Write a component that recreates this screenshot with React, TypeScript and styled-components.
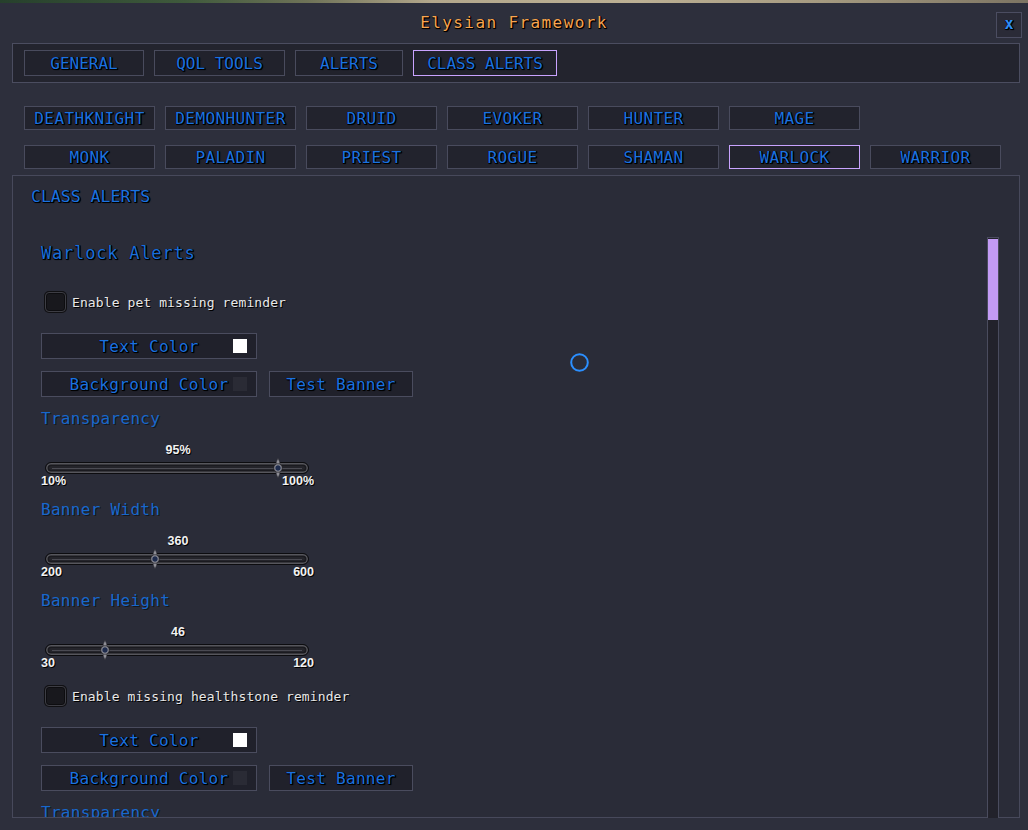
import React from "react";
import styled, { createGlobalStyle } from "styled-components";

const GlobalStyle = createGlobalStyle`
  html, body {
    margin: 0;
    padding: 0;
    width: 1028px;
    height: 830px;
    overflow: hidden;
    background: #2d2f3c;
  }
  body {
    font-family: "DejaVu Sans Mono", "Liberation Mono", monospace;
  }
  #root { width: 1028px; height: 830px; }
  * { box-sizing: border-box; }
`;

const BLUE = "#1b72e0";
const OUTLINE =
  "1px 1px 0 #000, 1px 0 0 #000, 0 1px 0 #000, -0.5px -0.5px 0 rgba(0,0,0,0.7), 1px 1px 1px #000";

const Backdrop = styled.div`
  position: relative;
  width: 1028px;
  height: 830px;
  display: flex;
  flex-direction: column;
  background: linear-gradient(
    90deg,
    #26402c 0%,
    #3f5a3c 18%,
    #6f7358 30%,
    #b3a78c 42%,
    #bcb094 62%,
    #a59a80 80%,
    #7d7563 100%
  );
`;

const Window = styled.div`
  margin-top: 3px;
  height: 827px;
  display: flex;
  flex-direction: column;
  padding: 0 8px 12px 12px;
  background: #2d2f3c;
`;

const TitleBar = styled.div`
  height: 40px;
  margin: 0 -8px 0 -12px;
  display: grid;
  grid-template-columns: 1fr auto 1fr;
  align-items: center;
`;

const Title = styled.div`
  grid-column: 2;
  font-size: 16px;
  line-height: 20px;
  letter-spacing: 1.4px;
  color: #f7a551;
  text-shadow: 1px 1px 0 #000, 1px 0 0 #000, 0 1px 0 #000, 1px 1px 1px #000;
`;

const CloseButton = styled.div`
  grid-column: 3;
  justify-self: end;
  align-self: start;
  margin: 9px 6px 0 0;
  width: 26px;
  height: 26px;
  border: 1px solid #4b4d61;
  background: #2a2b37;
  display: flex;
  align-items: center;
  justify-content: center;
  font-weight: bold;
  font-size: 15px;
  line-height: 1;
  color: #2e8df5;
  text-shadow: ${OUTLINE};
  padding-bottom: 2px;
`;

const TabBar = styled.div`
  height: 40px;
  border: 1px solid #4b4d60;
  background: #23242e;
  display: flex;
  align-items: center;
  gap: 10px;
  padding: 0 11px;
`;

const TabButton = styled.div<{ $w: number; $active?: boolean }>`
  width: ${(p) => p.$w}px;
  height: 26px;
  border: 1px solid ${(p) => (p.$active ? "#c9a3ff" : "#494b5d")};
  background: #21222c;
  display: flex;
  align-items: center;
  justify-content: center;
  font-size: 16px;
  color: ${BLUE};
  text-shadow: ${OUTLINE};
  white-space: nowrap;
`;

const ClassGrid = styled.div`
  margin-top: 23px;
  padding-left: 12px;
  display: grid;
  grid-template-columns: repeat(7, 131px);
  column-gap: 10px;
  row-gap: 15px;
`;

const ClassButton = styled.div<{ $active?: boolean; $rowStart?: boolean }>`
  grid-column-start: ${(p) => (p.$rowStart ? 1 : "auto")};
  height: 24px;
  border: 1px solid ${(p) => (p.$active ? "#c9a3ff" : "#494b5d")};
  background: #22232d;
  display: flex;
  align-items: center;
  justify-content: center;
  font-size: 16px;
  letter-spacing: 0.4px;
  color: ${BLUE};
  text-shadow: ${OUTLINE};
`;

const Panel = styled.div`
  margin-top: 6px;
  flex: 1;
  min-height: 0;
  border: 1px solid #47495b;
  background: #2a2c38;
  display: flex;
  flex-direction: column;
`;

const PanelHeader = styled.div`
  padding: 11px 0 0 18px;
  font-size: 16.5px;
  line-height: 20px;
  color: ${BLUE};
  text-shadow: ${OUTLINE};
`;

const PanelBody = styled.div`
  margin-top: 30px;
  flex: 1;
  min-height: 0;
  display: flex;
`;

const ScrollContent = styled.div`
  flex: 1;
  overflow: hidden;
  padding: 6px 0 0 28px;
  display: flex;
  flex-direction: column;
`;

const ScrollTrack = styled.div`
  width: 12px;
  margin: 0 20px -1px 0;
  border: 1px solid #4a4c5e;
  border-bottom: none;
  background: #22222b;
  padding: 1px 0 0 0;
`;

const ScrollThumb = styled.div`
  height: 81px;
  background: #c39bf5;
`;

const SectionTitle = styled.div`
  font-size: 17px;
  line-height: 20px;
  letter-spacing: 0.8px;
  color: #1a6fdb;
  text-shadow: ${OUTLINE};
`;

const CheckRow = styled.div<{ $mt: number }>`
  margin-top: ${(p) => p.$mt}px;
  height: 20px;
  padding-left: 4px;
  display: flex;
  align-items: center;
  gap: 6px;
`;

const CheckBox = styled.div`
  width: 21px;
  height: 20px;
  border-radius: 4px;
  background: #18181d;
  border: 1px solid #3d3d44;
  box-shadow: 0 0 0 1px #101013, inset 0 0 0 1px #0d0d10;
`;

const CheckLabel = styled.span`
  font-size: 13px;
  letter-spacing: 0.1px;
  color: #e8e8e8;
  text-shadow: 1px 1px 0 #000;
`;

const ButtonRow = styled.div<{ $mt: number }>`
  margin-top: ${(p) => p.$mt}px;
  display: flex;
  gap: 12px;
`;

const ActionButton = styled.div<{ $w: number }>`
  position: relative;
  width: ${(p) => p.$w}px;
  height: 26px;
  border: 1px solid #4a4c5e;
  background: #20212b;
  display: flex;
  align-items: center;
  justify-content: center;
  font-size: 16px;
  letter-spacing: 0.3px;
  color: ${BLUE};
  text-shadow: ${OUTLINE};
  white-space: nowrap;
`;

const Swatch = styled.span<{ $color: string }>`
  position: absolute;
  right: 9px;
  top: 5px;
  width: 14px;
  height: 14px;
  background: ${(p) => p.$color};
`;

const SectionLabel = styled.div<{ $mt: number }>`
  margin-top: ${(p) => p.$mt}px;
  font-size: 16px;
  line-height: 18px;
  letter-spacing: 0.3px;
  color: #1868cc;
  text-shadow: 1px 1px 0 rgba(0, 0, 0, 0.5);
`;

const SliderBlock = styled.div`
  margin-top: 15px;
  width: 273px;
  display: flex;
  flex-direction: column;
`;

const SliderText = styled.div`
  font-family: "Liberation Sans", Arial, sans-serif;
  font-weight: bold;
  font-size: 12.5px;
  line-height: 14px;
  color: #f2f2f2;
  text-shadow: 1px 1px 0 #000;
`;

const SliderValue = styled(SliderText)`
  text-align: center;
  padding-left: 1px;
`;

const Track = styled.div`
  position: relative;
  margin: 5px 5px 0 4px;
  height: 12px;
  border-radius: 6px;
  background: #24242a;
  border: 1px solid #0c0c0f;
  box-shadow: inset 0 0 0 1.5px #56565c, inset 0 0 0 3px #1a1a1f;

  &::after {
    content: "";
    position: absolute;
    left: 6px;
    right: 6px;
    top: 5px;
    height: 1px;
    background: #4a4a52;
  }
`;

const ThumbHolder = styled.div`
  position: absolute;
  top: -5px;
  width: 10px;
  height: 20px;
  margin-left: -5px;
  z-index: 1;
  display: flex;
`;

const RangeRow = styled(SliderText)`
  display: flex;
  justify-content: space-between;
`;

const CursorRing = styled.svg`
  position: absolute;
  left: 569px;
  top: 352px;
`;

const tabs = [
  { label: "GENERAL", w: 120 },
  { label: "QOL TOOLS", w: 131 },
  { label: "ALERTS", w: 108 },
  { label: "CLASS ALERTS", w: 144, active: true },
];

const classes = [
  "DEATHKNIGHT",
  "DEMONHUNTER",
  "DRUID",
  "EVOKER",
  "HUNTER",
  "MAGE",
  "MONK",
  "PALADIN",
  "PRIEST",
  "ROGUE",
  "SHAMAN",
  "WARLOCK",
  "WARRIOR",
];

const Thumb: React.FC = () => (
  <svg width="10" height="20" viewBox="0 0 10 20">
    <path d="M5 0 L6.8 4 L6.8 16 L5 20 L3.2 16 L3.2 4 Z" fill="#8e8e96" stroke="#2a2a30" strokeWidth="0.6" />
    <circle cx="5" cy="10" r="4.2" fill="#9a9aa2" stroke="#202026" strokeWidth="0.8" />
    <circle cx="5" cy="10" r="2.7" fill="#1f2c4d" />
  </svg>
);

type SliderProps = {
  label: string;
  mt: number;
  value: number;
  min: number;
  max: number;
  suffix?: string;
};

const Slider: React.FC<SliderProps> = ({ label, mt, value, min, max, suffix = "" }) => {
  const t = (value - min) / (max - min);
  return (
    <>
      <SectionLabel $mt={mt}>{label}</SectionLabel>
      <SliderBlock>
        <SliderValue>
          {value}
          {suffix}
        </SliderValue>
        <Track>
          <ThumbHolder style={{ left: `${19 + t * 226}px` }}>
            <Thumb />
          </ThumbHolder>
        </Track>
        <RangeRow>
          <span>
            {min}
            {suffix}
          </span>
          <span>
            {max}
            {suffix}
          </span>
        </RangeRow>
      </SliderBlock>
    </>
  );
};

const AlertGroup: React.FC<{ checkLabel: string; checkMt: number }> = ({ checkLabel, checkMt }) => (
  <>
    <CheckRow $mt={checkMt}>
      <CheckBox />
      <CheckLabel>{checkLabel}</CheckLabel>
    </CheckRow>
    <ButtonRow $mt={21}>
      <ActionButton $w={216}>
        Text Color
        <Swatch $color="#ffffff" />
      </ActionButton>
    </ButtonRow>
    <ButtonRow $mt={12}>
      <ActionButton $w={216}>
        Background Color
        <Swatch $color="#2a2b35" />
      </ActionButton>
      <ActionButton $w={144}>Test Banner</ActionButton>
    </ButtonRow>
  </>
);

export default function App() {
  return (
    <Backdrop>
      <GlobalStyle />
      <Window>
        <TitleBar>
          <Title>Elysian Framework</Title>
          <CloseButton>x</CloseButton>
        </TitleBar>
        <TabBar>
          {tabs.map((t) => (
            <TabButton key={t.label} $w={t.w} $active={t.active}>
              {t.label}
            </TabButton>
          ))}
        </TabBar>
        <ClassGrid>
          {classes.map((c) => (
            <ClassButton key={c} $active={c === "WARLOCK"} $rowStart={c === "MONK"}>
              {c}
            </ClassButton>
          ))}
        </ClassGrid>
        <Panel>
          <PanelHeader>CLASS ALERTS</PanelHeader>
          <PanelBody>
            <ScrollContent>
              <SectionTitle>Warlock Alerts</SectionTitle>
              <AlertGroup checkLabel="Enable pet missing reminder" checkMt={29} />
              <Slider label="Transparency" mt={13} value={95} min={10} max={100} suffix="%" />
              <Slider label="Banner Width" mt={13} value={360} min={200} max={600} />
              <Slider label="Banner Height" mt={13} value={46} min={30} max={120} />
              <AlertGroup checkLabel="Enable missing healthstone reminder" checkMt={16} />
              <SectionLabel $mt={13}>Transparency</SectionLabel>
            </ScrollContent>
            <ScrollTrack>
              <ScrollThumb />
            </ScrollTrack>
          </PanelBody>
        </Panel>
      </Window>
      <CursorRing width="21" height="21" viewBox="0 0 21 21">
        <circle cx="10.5" cy="10.5" r="8.3" fill="none" stroke="#2b8fff" strokeWidth="2" />
      </CursorRing>
    </Backdrop>
  );
}
